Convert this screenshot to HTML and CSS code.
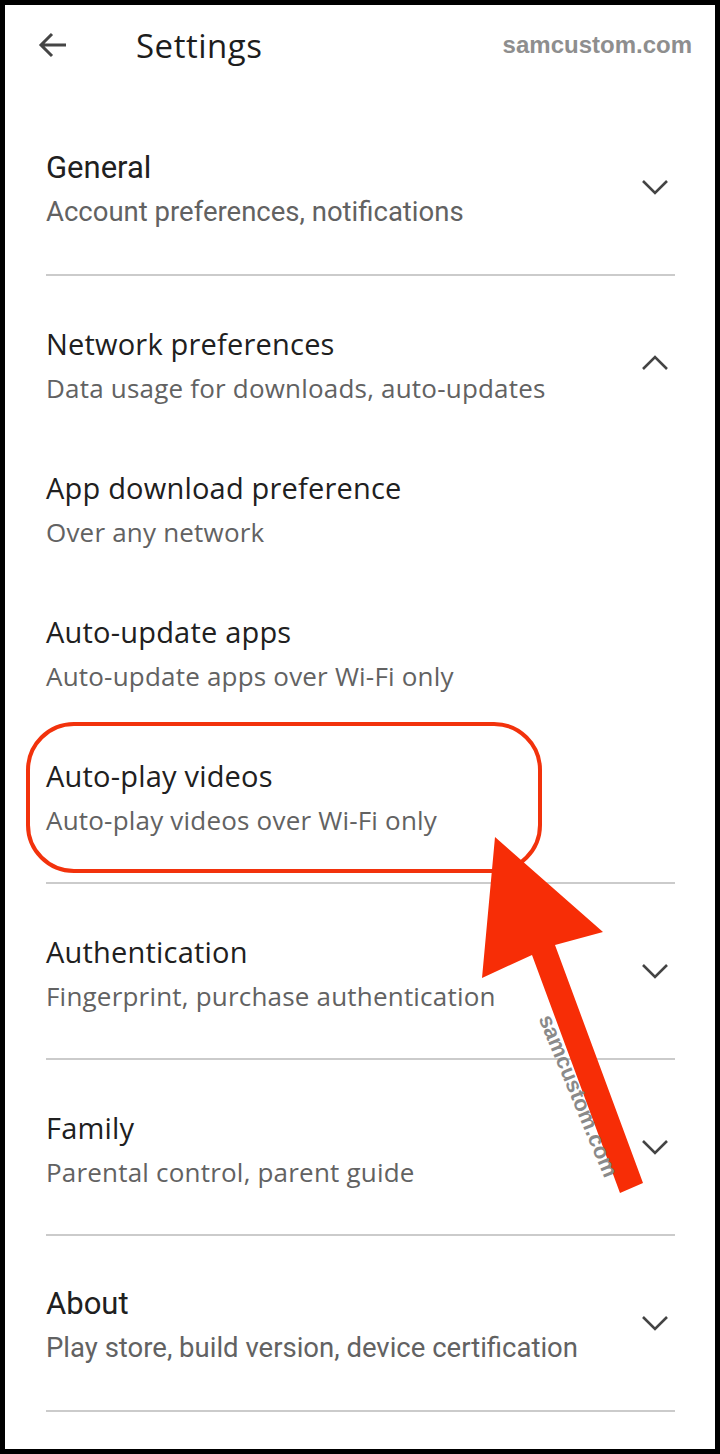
FILE: index.html
```html
<!DOCTYPE html>
<html lang="en">
<head>
    <meta charset="UTF-8">
    <meta name="viewport" content="width=device-width, initial-scale=1.0">
    <title>Settings</title>
    <link rel="stylesheet" href="styles.css">
</head>
<body>
    <div class="screen">
        <header class="topbar">
            <svg class="back" viewBox="0 0 32 32" width="32" height="32">
                <path d="M29 16H4 M15 5L4 16l11 11" fill="none" stroke="#454545" stroke-width="3"/>
            </svg>
            <h1 class="page-title">Settings</h1>
            <span class="brand">samcustom.com</span>
        </header>

        <div class="list">
            <section class="group classic">
                <div class="row">
                    <div class="text">
                        <div class="name">General</div>
                        <div class="desc">Account preferences, notifications</div>
                    </div>
                    <svg class="chevron" viewBox="0 0 40 20" width="40" height="20"><path d="M28 4l-12 12L4 4" transform="translate(4 0)" fill="none" stroke="#444" stroke-width="2.6"/></svg>
                </div>
            </section>

            <section class="group">
                <div class="row">
                    <div class="text">
                        <div class="name">Network preferences</div>
                        <div class="desc">Data usage for downloads, auto-updates</div>
                    </div>
                    <svg class="chevron" viewBox="0 0 40 20" width="40" height="20"><path d="M28 16L16 4 4 16" transform="translate(4 0)" fill="none" stroke="#444" stroke-width="2.6"/></svg>
                </div>
                <div class="item">
                    <div class="name">App download preference</div>
                    <div class="desc">Over any network</div>
                </div>
                <div class="item">
                    <div class="name">Auto-update apps</div>
                    <div class="desc">Auto-update apps over Wi-Fi only</div>
                </div>
                <div class="item">
                    <div class="name">Auto-play videos</div>
                    <div class="desc">Auto-play videos over Wi-Fi only</div>
                </div>
            </section>

            <section class="group">
                <div class="row">
                    <div class="text">
                        <div class="name">Authentication</div>
                        <div class="desc">Fingerprint, purchase authentication</div>
                    </div>
                    <svg class="chevron" viewBox="0 0 40 20" width="40" height="20"><path d="M28 4l-12 12L4 4" transform="translate(4 0)" fill="none" stroke="#444" stroke-width="2.6"/></svg>
                </div>
            </section>

            <section class="group">
                <div class="row">
                    <div class="text">
                        <div class="name">Family</div>
                        <div class="desc">Parental control, parent guide</div>
                    </div>
                    <svg class="chevron" viewBox="0 0 40 20" width="40" height="20"><path d="M28 4l-12 12L4 4" transform="translate(4 0)" fill="none" stroke="#444" stroke-width="2.6"/></svg>
                </div>
            </section>

            <section class="group classic">
                <div class="row">
                    <div class="text">
                        <div class="name">About</div>
                        <div class="desc">Play store, build version, device certification</div>
                    </div>
                    <svg class="chevron" viewBox="0 0 40 20" width="40" height="20"><path d="M28 4l-12 12L4 4" transform="translate(4 0)" fill="none" stroke="#444" stroke-width="2.6"/></svg>
                </div>
            </section>
        </div>

        <!-- annotation layer -->
        <div class="highlight"></div>
        <svg class="pointer" viewBox="5 5 710 1444" width="710" height="1444">
            <polygon points="495,837 603,932 555,945 643,1183 620,1193 532,955 482,978" fill="#f72d06"/>
        </svg>
        <span class="stamp">samcustom.com</span>
    </div>
</body>
</html>
```

FILE: styles.css
```css
body {
    margin: 0;
    background: #fff;
}

.screen {
    position: relative;
    width: 720px;
    height: 1454px;
    box-sizing: border-box;
    border: 5px solid #000;
    background: #fff;
    font-family: "Open Sans", sans-serif;
    overflow: hidden;
}

/* Top bar */
.topbar {
    display: flex;
    align-items: center;
    height: 80px;
    padding: 0 23px 0 32px;
}

.back {
    flex: none;
}

.page-title {
    margin: 0 0 0 67px;
    font-size: 33px;
    font-weight: 400;
    letter-spacing: 0.5px;
    color: #1d1d1d;
}

.brand {
    margin-left: auto;
    font-family: "Liberation Sans", Arial, sans-serif;
    font-weight: bold;
    font-size: 24px;
    color: #8e8e8e;
}

/* Settings list */
.list {
    padding-top: 15px;
}

.group {
    margin: 0 40px 0 41px;
    padding: 46px 0 40px;
    border-bottom: 2px solid #cbcbcb;
}

.row {
    display: flex;
    align-items: center;
}

.text {
    flex: 1;
}

.chevron {
    flex: none;
    margin-bottom: 6px;
}

.item {
    padding-top: 56px;
}

.name {
    font-size: 29px;
    line-height: 44px;
    letter-spacing: 0.2px;
    color: #202020;
}

.desc {
    font-size: 26px;
    line-height: 44px;
    letter-spacing: 0.2px;
    color: #626262;
}

.classic .name {
    font-family: Roboto, sans-serif;
    font-size: 31px;
    letter-spacing: 0;
}

.classic .desc {
    font-family: Roboto, sans-serif;
    font-size: 27.5px;
    letter-spacing: 0;
}

/* Annotation */
.highlight {
    position: absolute;
    left: 21px;
    top: 717px;
    width: 516px;
    height: 151px;
    box-sizing: border-box;
    border: 4px solid #f2320c;
    border-radius: 48px;
}

.pointer {
    position: absolute;
    left: 0;
    top: 0;
}

.stamp {
    position: absolute;
    left: 573px;
    top: 1091px;
    transform: translate(-50%, -50%) rotate(67.6deg);
    font-family: "Liberation Sans", Arial, sans-serif;
    font-weight: bold;
    font-size: 22px;
    color: #8a8a8a;
    white-space: nowrap;
}
```
